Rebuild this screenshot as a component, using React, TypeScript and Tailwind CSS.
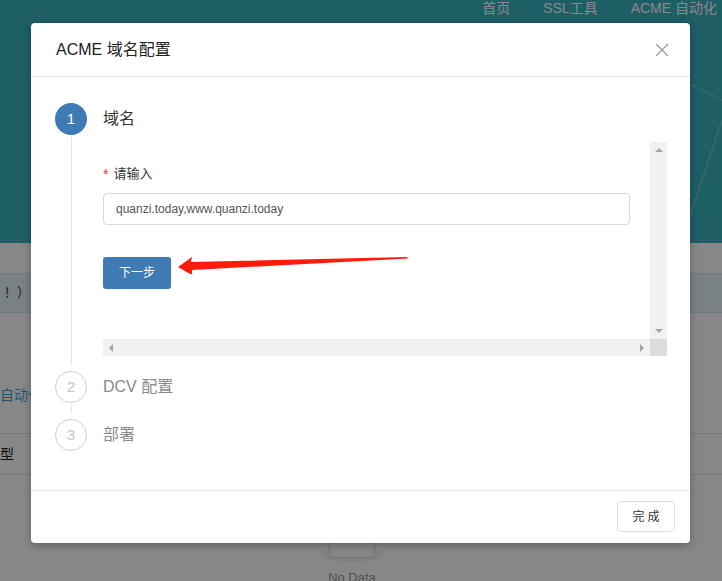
export default function App() {
  return (
    <div className="relative w-[722px] h-[581px] overflow-hidden bg-white font-['Liberation_Sans','Noto_Sans_CJK_SC',sans-serif]">
      {/* page behind the mask */}
      <div className="relative h-[243px] bg-[#39b3c1]">
        <svg className="absolute right-0 top-[60px]" width="40" height="180" viewBox="0 0 40 180">
          <line x1="0" y1="20" x2="40" y2="40" stroke="#7fd3dc" strokeWidth="1" />
          <line x1="0" y1="180" x2="40" y2="60" stroke="#7fd3dc" strokeWidth="1" />
        </svg>
        <div className="flex justify-end gap-[33px] pr-[5px] text-[14px] leading-[16px] text-white">
          <span>首页</span>
          <span>SSL工具</span>
          <span>ACME 自动化</span>
        </div>
      </div>
      <div className="flex flex-col">
        <div className="mt-[30px] h-[40px] border-y border-[#cde6f3] bg-[#e6f4fb] flex items-center pl-[4px] text-[13px] text-[#3a3a3a]">！）</div>
        <div className="mt-[72px] text-[14px] text-[#3b9fd6]">自动化</div>
        <div className="mt-[27px] h-[42px] border-y border-[#e0e0e0] flex items-center text-[14px] text-[#222]">型</div>
        <div className="mt-[43px] flex flex-col items-center pr-[18px]">
          <div className="relative flex flex-col items-center">
            <div className="w-[64px] h-[14px] rounded-[50%] bg-[#f3f3f3] absolute top-[30px]" />
            <div className="relative h-[40px] w-[46px] border border-[#dddddd] rounded-[3px] bg-white" />
          </div>
          <div className="mt-[10px] text-[13px] text-[#999]">No Data</div>
        </div>
      </div>

      {/* mask */}
      <div className="absolute inset-0 bg-black/[0.47]" />

      {/* dialog */}
      <div className="absolute left-[31px] top-[23px] w-[659px] h-[520px] bg-white rounded-[4px] shadow-[0_2px_8px_rgba(0,0,0,0.3)] flex flex-col">
        <div className="h-[54px] flex items-center justify-between pl-[25px] pr-[21px] border-b border-[#e5e5e5]">
          <span className="text-[16px] text-[#222] pt-[1px]">ACME 域名配置</span>
          <svg width="14" height="14" viewBox="0 0 14 14">
            <line x1="1" y1="1" x2="13" y2="13" stroke="#9a9a9a" strokeWidth="1.3" />
            <line x1="13" y1="1" x2="1" y2="13" stroke="#9a9a9a" strokeWidth="1.3" />
          </svg>
        </div>

        <div className="flex-1 pt-[26px] pl-[24px]">
          {/* step 1 */}
          <div className="flex">
            <div className="w-[32px] flex flex-col items-center">
              <div className="w-[32px] h-[32px] rounded-full bg-[#3e7ab3] text-white text-[15px] flex items-center justify-center">1</div>
              <div className="w-px h-[228px] mt-[2px] bg-[#e3e3e3]" />
            </div>
            <div className="ml-[16px] flex flex-col">
              <div className="h-[32px] flex items-center text-[16px] text-[#333]">域名</div>
              <div className="relative mt-[7px] w-[564px] h-[214px] flex flex-col">
                <div className="flex flex-1">
                  <div className="flex-1 flex flex-col pt-[22px]">
                    <div className="h-[20px] text-[13px] text-[#333] flex items-center gap-[5px]">
                      <span className="text-[#e4393c] text-[14px]">*</span>
                      <span>请输入</span>
                    </div>
                    <div className="mt-[9px] w-[527px] h-[32px] border border-[#d9d9d9] rounded-[4px] flex items-center pl-[12px] text-[12px] text-[#555]">
                      quanzi.today,www.quanzi.today
                    </div>
                    <div className="mt-[32px] w-[68px] h-[32px] rounded-[3px] bg-[#3e7ab3] text-white text-[12px] flex items-center justify-center">下一步</div>
                  </div>
                  <div className="w-[17px] bg-[#f1f1f1] flex flex-col items-center justify-between py-[6px]">
                    <div className="w-0 h-0 border-x-[4px] border-x-transparent border-b-[4px] border-b-[#a3a3a3]" />
                    <div className="w-0 h-0 border-x-[4px] border-x-transparent border-t-[4px] border-t-[#a3a3a3]" />
                  </div>
                </div>
                <div className="h-[17px] flex">
                  <div className="flex-1 bg-[#f1f1f1] flex items-center justify-between px-[6px]">
                    <div className="w-0 h-0 border-y-[4px] border-y-transparent border-r-[4px] border-r-[#a3a3a3]" />
                    <div className="w-0 h-0 border-y-[4px] border-y-transparent border-l-[4px] border-l-[#a3a3a3]" />
                  </div>
                  <div className="w-[17px] bg-[#dcdcdc]" />
                </div>
                {/* annotation arrow */}
                <svg className="absolute left-[74px] top-[108px]" width="232" height="24" viewBox="0 0 232 24">
                  <polygon points="1,17 15,7 14,12 230,7 231,8.5 15,20 15,25" fill="#ff1a0e" />
                </svg>
              </div>
            </div>
          </div>

          {/* step 2 */}
          <div className="flex mt-[6px]">
            <div className="w-[32px] flex flex-col items-center">
              <div className="w-[32px] h-[32px] rounded-full border border-[#cfcfcf] text-[#c4c4c4] text-[15px] flex items-center justify-center">2</div>
              <div className="w-px h-[8px] mt-[2px] bg-[#e3e3e3]" />
            </div>
            <div className="ml-[16px] h-[32px] flex items-center text-[16px] text-[#8a8a8a]">DCV 配置</div>
          </div>

          {/* step 3 */}
          <div className="flex mt-[6px]">
            <div className="w-[32px] flex flex-col items-center">
              <div className="w-[32px] h-[32px] rounded-full border border-[#cfcfcf] text-[#c4c4c4] text-[15px] flex items-center justify-center">3</div>
            </div>
            <div className="ml-[16px] h-[32px] flex items-center text-[16px] text-[#8a8a8a]">部署</div>
          </div>
        </div>

        <div className="h-[53px] border-t border-[#e5e5e5] flex justify-end items-start pt-[10px] pr-[15px]">
          <div className="w-[58px] h-[31px] border border-[#dcdcdc] rounded-[4px] flex items-center justify-center text-[12px] text-[#333] tracking-[3px] pl-[3px]">完成</div>
        </div>
      </div>
    </div>
  );
}
